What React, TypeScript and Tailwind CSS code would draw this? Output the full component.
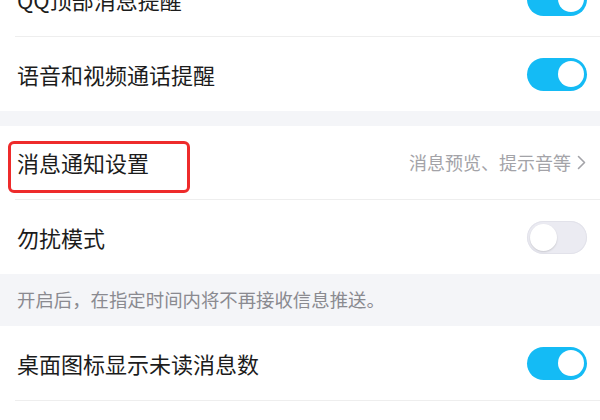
import React from 'react';

const FONT = { fontFamily: '"Noto Sans CJK SC", "Noto Sans", sans-serif' };

function Toggle({ on }: { on: boolean }) {
  return on ? (
    <div className="flex h-[33px] w-[60px] items-center justify-end rounded-full bg-[#14bbf5] pr-[3px]">
      <div className="h-[26px] w-[26px] rounded-full bg-white" />
    </div>
  ) : (
    <div className="flex h-[33px] w-[60px] items-center justify-start rounded-full bg-[#ebebf2] pl-[3px] shadow-[inset_0_0_0_1px_#e2e2ea]">
      <div className="h-[27px] w-[27px] rounded-full bg-white shadow-[0_1px_2px_rgba(0,0,0,0.15)]" />
    </div>
  );
}

function Row({ label, on, divider = true }: { label?: string; on: boolean; divider?: boolean }) {
  return (
    <div className="bg-white">
      <div className="flex h-[74px] items-center justify-between pl-[17px] pr-[13px]">
        <span className="text-[22px] text-[#1c1c1c]">{label}</span>
        <Toggle on={on} />
      </div>
      {divider && <div className="ml-[15px] h-px bg-[#eeeeee]" />}
    </div>
  );
}

export default function App() {
  return (
    <div className="h-[420px] w-[600px] overflow-hidden bg-[#f4f5f8]" style={FONT}>
      <div className="-mt-[38px]">
        <Row label="QQ顶部消息提醒" on />
        <Row label="语音和视频通话提醒" on divider={false} />

        <div className="h-[15px]" />

        {/* Message notification settings */}
        <div className="bg-white">
          <div className="relative flex h-[73px] items-center justify-between pl-[17px] pr-[14px]">
            <span className="text-[22px] text-[#1c1c1c]">消息通知设置</span>
            <div className="flex items-center gap-[6px] text-[18px] text-[#a3a3a8]">
              <span>消息预览、提示音等</span>
              <svg width="9" height="15" viewBox="0 0 9 15" fill="none">
                <path d="M1.5 1.5 L7.5 7.5 L1.5 13.5" stroke="#a3a3a8" strokeWidth="1.6" strokeLinecap="round" strokeLinejoin="round" />
              </svg>
            </div>
            {/* red annotation box */}
            <div className="absolute left-[8px] top-[15px] h-[52px] w-[182px] rounded-[6px] border-[3px] border-[#ee2b2b]" />
          </div>
          <div className="ml-[15px] h-px bg-[#eeeeee]" />
        </div>

        <Row label="勿扰模式" on={false} divider={false} />

        <div className="flex h-[52px] items-center pl-[17px] text-[18.4px] text-[#8a8a90]">
          开启后，在指定时间内将不再接收信息推送。
        </div>

        <Row label="桌面图标显示未读消息数" on />
        <Row on />
      </div>
    </div>
  );
}
